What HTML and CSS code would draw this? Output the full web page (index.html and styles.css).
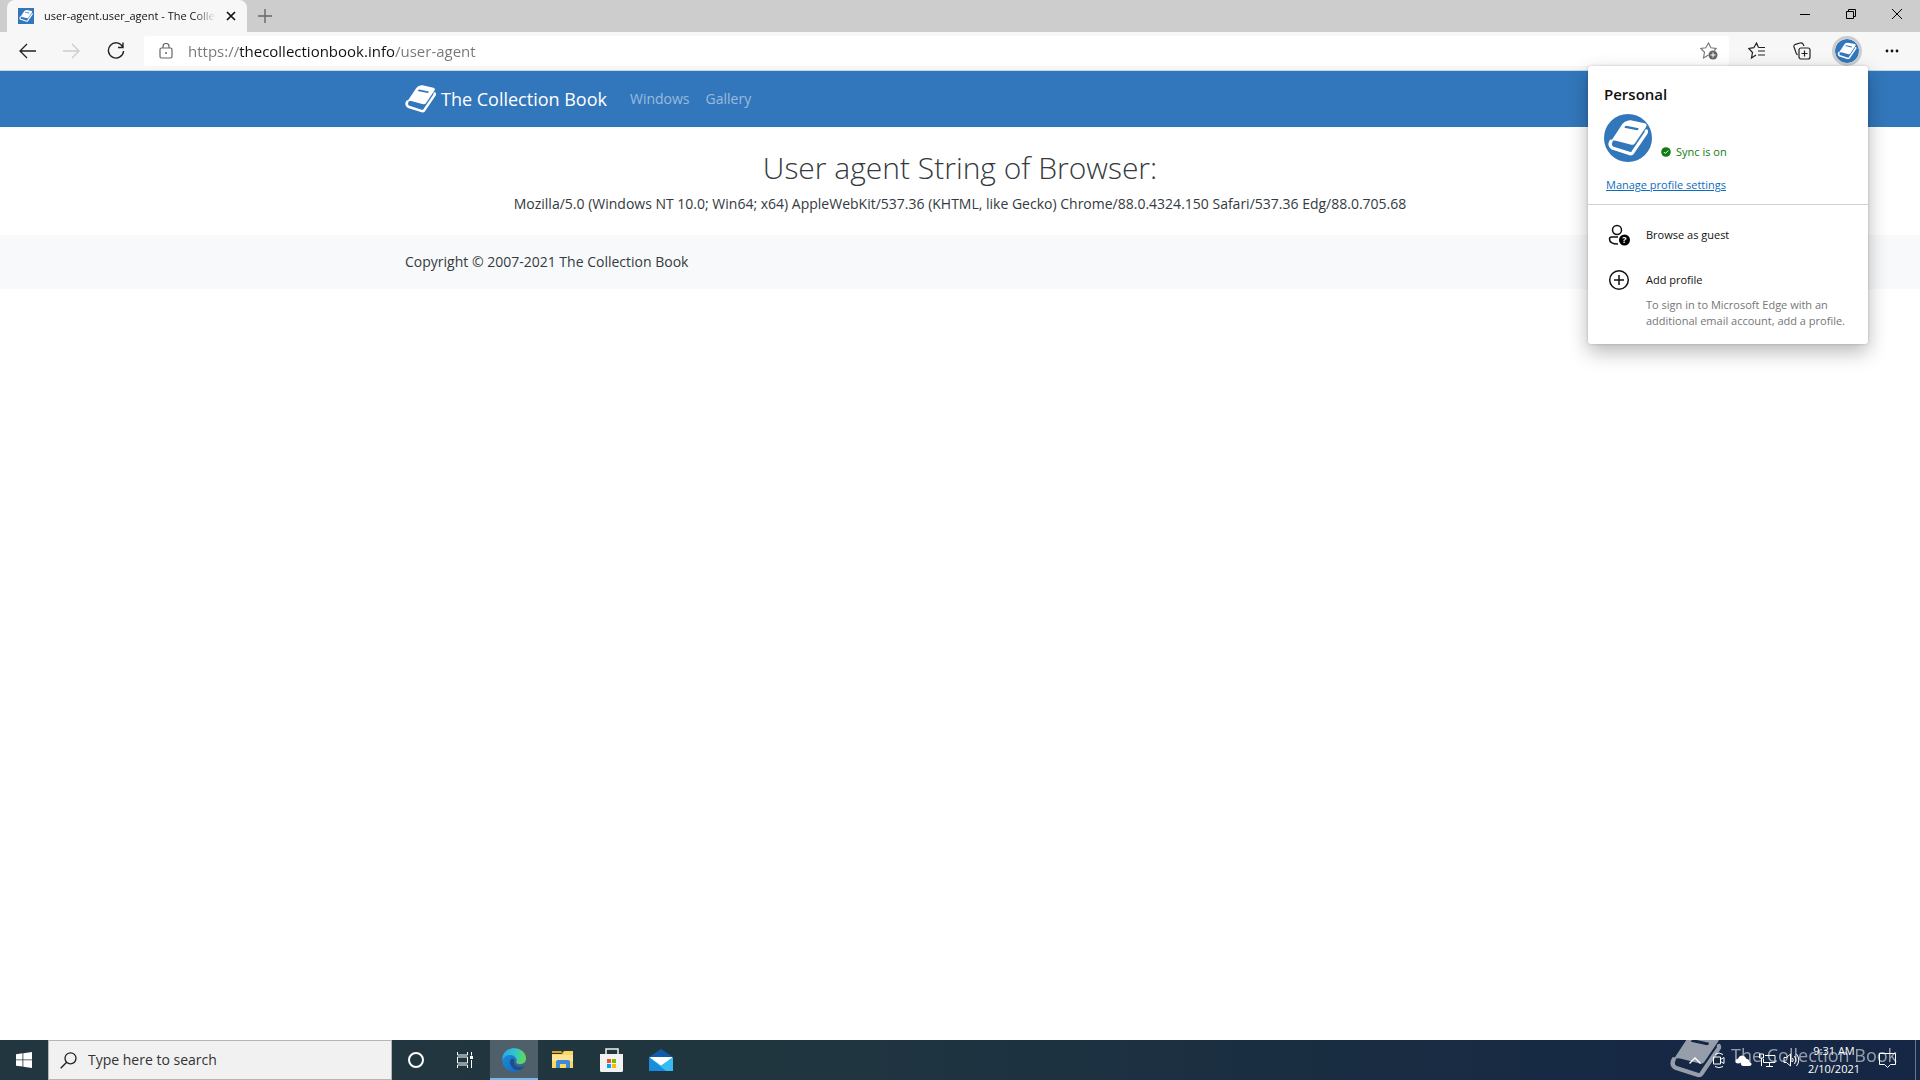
FILE: index.html
```html
<!DOCTYPE html>
<html lang="en">
<head>
<meta charset="utf-8">
<title>user-agent.user_agent - The Collection Book</title>
<link rel="stylesheet" href="styles.css">
</head>
<body>
<svg class="defs" aria-hidden="true">
  <symbol id="book" viewBox="0 0 120 108">
    <path fill="currentColor" fill-rule="evenodd" d="M59 2Q63 0 68 1L110 10Q119 13 114 21L81 70Q77 76 70 74L24 62Q15 60 8 65L43 12Q48 4 59 2ZM55 17Q51 17 49 23L87 31Q91 31 92 25Z"/>
    <path fill="none" stroke="currentColor" stroke-width="10" stroke-linecap="round" stroke-linejoin="round" d="M9 64Q2 77 13 84L66 101Q71 102 74 98L114 39Q116 36 115 33"/>
  </symbol>
</svg>
<div class="screen">
  <header class="browser">
    <div class="tabstrip">
      <div class="tab">
        <svg class="favicon" viewBox="0 0 16 16"><path fill="#3277bb" d="M0 0h16v16H0z"/><use href="#book" x="1" y="2" width="14" height="12"/></svg>
        <span class="tab-title">user-agent.user_agent - The Collection Book</span>
        <button class="plain" aria-label="Close tab"><svg width="10" height="10" viewBox="0 0 10 10"><path d="M1 1l8 8M9 1l-8 8" stroke="#111" stroke-width="1.700"/></svg></button>
      </div>
      <button class="plain new-tab" aria-label="New tab"><svg width="14" height="14" viewBox="0 0 14 14"><path d="M7 0v14M0 7h14" stroke="#666" stroke-width="1.400"/></svg></button>
      <div class="window-controls">
        <button class="plain" aria-label="Minimize"><svg width="10" height="10" viewBox="0 0 10 10"><path d="M0 5.500h10" stroke="#000"/></svg></button>
        <button class="plain" aria-label="Restore"><svg width="10" height="10" viewBox="0 0 10 10"><path d="M.5 2.500h7v7h-7zM2.500 2.500v-2h7v7h-2" fill="none" stroke="#000"/></svg></button>
        <button class="plain" aria-label="Close"><svg width="10" height="10" viewBox="0 0 10 10"><path d="M0 0l10 10M10 0L0 10" stroke="#000"/></svg></button>
      </div>
    </div>
    <div class="toolbar">
      <div class="nav-buttons">
        <button class="plain" aria-label="Back"><svg width="18" height="16" viewBox="0 0 18 16"><path d="M17 8H1M8 1L1 8l7 7" fill="none" stroke="#222" stroke-width="1.300"/></svg></button>
        <button class="plain" aria-label="Forward" disabled><svg width="18" height="16" viewBox="0 0 18 16"><path d="M0 8h16M9 1l7 7-7 7" fill="none" stroke="#ccc" stroke-width="1.300"/></svg></button>
        <button class="plain" aria-label="Refresh"><svg width="18" height="18" viewBox="0 0 18 18"><path d="M15.800 5A7.600 7.600 0 1 0 16.600 9M16 .5V5.500H11" fill="none" stroke="#222" stroke-width="1.400"/></svg></button>
      </div>
      <div class="address">
        <svg class="lock" width="14" height="16" viewBox="0 0 14 16"><g fill="none" stroke="#666" stroke-width="1.200"><rect x="1" y="5" width="12" height="10" rx="1.500"/><path d="M4 5V3.500a3 3 0 0 1 6 0V5"/></g><circle cx="7" cy="10" r="1" fill="#666"/></svg>
        <input class="url" type="text" aria-label="Address" value="https://thecollectionbook.info/user-agent">
        <button class="plain" aria-label="Add to favorites"><svg width="18" height="18" viewBox="0 0 18 18"><path d="M8.500 13L3.500 16l1-5.700L.8 6.500l5-.8L8.500 1l2.400 4.700 5.300.8-2 2" fill="none" stroke="#777" stroke-width="1.100"/><circle cx="13" cy="13" r="4.500" fill="#666"/><path d="M13 10.500v5M10.500 13h5" stroke="#fff"/></svg></button>
      </div>
      <div class="tools">
        <button class="plain" aria-label="Favorites"><svg width="18" height="18" viewBox="0 0 18 18"><path d="M8 13L3.500 16l1-5.500L.8 6.500l5-.8L8.500 1l2 4.500M10.500 5.500H17M10 9h7M10 13h7" fill="none" stroke="#222" stroke-width="1.200"/></svg></button>
        <button class="plain" aria-label="Collections"><svg width="18" height="18" viewBox="0 0 18 18"><g fill="none" stroke="#222" stroke-width="1.200"><rect x="6" y="6" width="11" height="11" rx="2"/><path d="M11.500 8.500v6M8.500 11.500h6M4.500 13Q2.500 11 2.500 9L1 5Q.5 3 2.500 2.300L7 1Q9 .5 10 2l1 2"/></g></svg></button>
        <button class="plain profile-button" aria-label="Profile"><svg class="avatar" viewBox="0 0 48 48"><circle cx="24" cy="24" r="24" fill="#3277bb"/><use href="#book" x="4" y="7" width="40" height="34"/></svg></button>
        <button class="plain" aria-label="Settings and more"><svg width="14" height="4" viewBox="0 0 14 4"><g fill="#111"><circle cx="2" cy="2" r="1.400"/><circle cx="7" cy="2" r="1.400"/><circle cx="12" cy="2" r="1.400"/></g></svg></button>
      </div>
    </div>
    <aside class="profile-menu">
      <section class="profile-head">
        <h2>Personal</h2>
        <div class="profile-row">
          <svg class="avatar large" viewBox="0 0 48 48"><circle cx="24" cy="24" r="24" fill="#3277bb"/><use href="#book" x="4" y="6" width="40" height="36"/></svg>
          <span class="sync"><svg width="10" height="10" viewBox="0 0 10 10"><circle cx="5" cy="5" r="4.800" fill="#107c10"/><path d="M2.800 5l1.500 1.500 3-3" fill="none" stroke="#fff"/></svg>Sync is on</span>
        </div>
        <a href="#profile">Manage profile settings</a>
      </section>
      <section class="profile-actions">
        <button class="plain action"><svg width="22" height="22" viewBox="0 0 22 22"><g fill="none" stroke="#111" stroke-width="1.500"><circle cx="9" cy="6" r="4.500"/><path d="M10 13H3.500Q1.500 13 1.500 15Q1.500 20 10 20"/></g><circle cx="16.500" cy="16" r="5.500"/><text x="16.500" y="19" text-anchor="middle" class="question">?</text></svg><span>Browse as guest</span></button>
        <button class="plain action"><svg width="22" height="22" viewBox="0 0 22 22"><g fill="none" stroke="#111" stroke-width="1.500"><circle cx="11" cy="11" r="9.300"/><path d="M11 6v10M6 11h10"/></g></svg><span>Add profile</span></button>
        <p>To sign in to Microsoft Edge with an additional email account, add a profile.</p>
      </section>
    </aside>
  </header>

  <nav class="site-nav">
    <div class="container">
      <a class="brand" href="#home"><svg width="31" height="28"><use href="#book"/></svg>The Collection Book</a>
      <a class="nav-link" href="#windows">Windows</a>
      <a class="nav-link" href="#gallery">Gallery</a>
    </div>
  </nav>
  <main>
    <h1>User agent String of Browser:</h1>
    <p>Mozilla/5.0 (Windows NT 10.0; Win64; x64) AppleWebKit/537.36 (KHTML, like Gecko) Chrome/88.0.4324.150 Safari/537.36 Edg/88.0.705.68</p>
  </main>
  <footer class="site-footer"><div class="container">Copyright © 2007-2021 The Collection Book</div></footer>

  <div class="taskbar">
    <button class="plain task" aria-label="Start"><svg width="16" height="16" viewBox="0 0 16 16"><path fill="#fff" d="M0 2.200L6.500 1.300V7.500H0zM7.300 1.200L16 0v7.500H7.300zM0 8.300h6.500v6.300L0 13.700zM7.300 8.300H16V16l-8.700-1.200z"/></svg></button>
    <label class="search">
      <svg width="17" height="17" viewBox="0 0 17 17"><circle cx="10.500" cy="6.300" r="5.500" fill="none" stroke="#222" stroke-width="1.300"/><path d="M6.700 10.200L.7 16.300" stroke="#222" stroke-width="1.400"/></svg>
      <input type="search" aria-label="Search" placeholder="Type here to search">
    </label>
    <div class="apps">
      <button class="plain task" aria-label="Cortana"><svg width="18" height="18" viewBox="0 0 18 18"><circle cx="9" cy="9" r="7" fill="none" stroke="#fff" stroke-width="2"/></svg></button>
      <button class="plain task" aria-label="Task View"><svg width="18" height="16" viewBox="0 0 18 16"><path d="M1.500 0v3h10V0M1.500 16v-3h10v3M1.500 5h10v6h-10zM15.500 0v3.500M15.500 8v8" fill="none" stroke="#fff"/><path fill="#fff" d="M14 4h3v3h-3z"/></svg></button>
      <button class="plain task active" aria-label="Microsoft Edge"><svg width="24" height="24" viewBox="0 0 24 24"><defs><linearGradient id="e1" x1="0" x2="1" y1=".4" y2=".5"><stop stop-color="#2aa8e8"/><stop offset=".5" stop-color="#2fc5ce"/><stop offset="1" stop-color="#63dc50"/></linearGradient><linearGradient id="e2" x2="1" y2="1"><stop stop-color="#1f92df"/><stop offset="1" stop-color="#1761b5"/></linearGradient></defs><circle cx="12" cy="12" r="11.800" fill="url(#e2)"/><path fill="#164f96" d="M10 10Q6 14 9.500 18.500Q13 23.500 19 21.500Q21.500 20 22.500 18Q17 20.500 13.700 17.500Q11 15 12.500 12Z"/><path fill="#50606b" d="M13 11Q11 15 14 17.500Q17.500 20.300 22.600 17.800L24 16.500V14Q20 17.500 16 16Q13.500 15 14.300 13Z"/><path fill="url(#e1)" d="M.2 12C.5 5 5.500.2 12 .2C19 .2 24 5 24 10.500C24 15 19.500 17 15.800 15.800C13 14.800 15 13.500 14.500 11.300C13.800 8.500 11 7 8 7C4.500 7 1.500 9 .2 12Z"/></svg></button>
      <button class="plain task" aria-label="File Explorer"><svg width="22" height="20" viewBox="0 0 22 20"><path fill="#e6a01e" d="M0 1h9l2 2H0z"/><path fill="#fbd766" d="M0 4h10l2-3h9v17H0z"/><path fill="#ffe497" d="M0 5h21v6H0z"/><path fill="#3c8cd1" d="M4 18v-6q0-2 2-2h10q2 0 2 2v6h-4v-4H8v4z"/></svg></button>
      <button class="plain task" aria-label="Microsoft Store"><svg width="24" height="24" viewBox="0 0 24 24"><path d="M6 7V1h12v6" fill="none" stroke="#f2f2f2" stroke-width="1.500"/><path fill="#f2f2f2" d="M0 6h23v16.500q0 1.500-1.500 1.500H1.500Q0 24 0 22.500z"/><path fill="#f25022" d="M7 11h4v4H7z"/><path fill="#7fba00" d="M12 11h4v4h-4z"/><path fill="#00a4ef" d="M7 16h4v4H7z"/><path fill="#ffb900" d="M12 16h4v4h-4z"/></svg></button>
      <button class="plain task" aria-label="Mail"><svg width="24" height="22" viewBox="0 0 24 22"><path fill="#0f5ba9" d="M0 8L12 0l12 8v4H0z"/><path fill="#fff" d="M1 8h22v6l-11 3-9-5z"/><path fill="#35bdf3" d="M0 8l12 8.500L24 8v14H0z"/><path fill="#1a8cdb" d="M0 22V8l17 14z"/></svg></button>
    </div>
    <div class="tray">
      <button class="plain" aria-label="Show hidden icons"><svg width="12" height="7" viewBox="0 0 12 7"><path d="M.5 6.500L6 1l5.500 5.500" fill="none" stroke="#fff" stroke-width="1.300"/></svg></button>
      <button class="plain" aria-label="Meet Now"><svg width="14" height="16" viewBox="0 0 14 16"><path d="M1.500 5h7v7h-7zM8.500 7.500l3.500-2v6l-3.500-2M3 2.500Q7-.5 11 2.500M3 14.500Q7 17 11 14.500" fill="none" stroke="#fff"/></svg></button>
      <button class="plain" aria-label="OneDrive"><svg width="17" height="11" viewBox="0 0 17 11"><path fill="#fff" d="M1 8Q-.5 4.500 3 3.500Q5-.5 9 1Q11 2 11 3.500Q14.500 4 14.500 7Q17 7.500 16.500 9.500Q16 11 14 11H8Q5 10.500 6 7.500Q4 9 1 8Z"/></svg></button>
      <button class="plain" aria-label="Network"><svg width="17" height="14" viewBox="0 0 17 14"><path d="M6 2.500h10v7H4.500V6M.5 1h4v4h-4zM2.500 5v8M10.500 9.500v4M7 13.500h7" fill="none" stroke="#fff"/></svg></button>
      <button class="plain" aria-label="Volume"><svg width="17" height="14" viewBox="0 0 17 14"><path d="M1 4.500h2.500l4-3.500v12l-4-3.500H1zM9.500 5q1.500 2 0 4M11.500 3q3 4 0 8M13.500 1q4.500 6 0 12" fill="none" stroke="#fff"/></svg></button>
      <button class="plain clock"><span>9:31 AM</span><span>2/10/2021</span></button>
      <button class="plain notify" aria-label="Notifications"><svg width="17" height="17" viewBox="0 0 17 17"><path d="M.5 1.500h16v11h-5l-3 3-3-3h-5z" fill="none" stroke="#fff"/></svg></button>
      <button class="plain desktop" aria-label="Show desktop"></button>
    </div>
    <div class="watermark"><svg width="53" height="46"><use href="#book"/></svg><span>The Collection Book</span></div>
  </div>
</div>
</body>
</html>
```
FILE: styles.css
```css
* { box-sizing: border-box; }
body { margin: 0; font: 14px/24px "Open Sans", "Noto Sans", sans-serif; color: #343a40; background: #fff; }
h1, h2, p { margin: 0; font-weight: 400; }
svg { display: block; flex: none; }
.defs { position: absolute; width: 0; height: 0; }
.plain { display: flex; align-items: center; justify-content: center; padding: 0; border: 0; background: none; color: inherit; font: inherit; }
.screen { display: flex; flex-direction: column; min-height: 100vh; }

.browser { position: relative; z-index: 1; }
.tabstrip { display: flex; height: 32px; padding-left: 7px; background: #cdcdcd; }
.tab { display: flex; align-items: center; width: 240px; padding: 0 11px; gap: 10px; border-radius: 8px 8px 0 0; background: #f7f7f7; color: #111; font-size: 11px; }
.favicon { width: 16px; height: 16px; color: #fff; }
.tab-title { flex: 1; overflow: hidden; white-space: nowrap; -webkit-mask-image: linear-gradient(90deg, #000 87%, transparent); mask-image: linear-gradient(90deg, #000 87%, transparent); }
.new-tab { width: 36px; }
.window-controls { display: flex; margin-left: auto; padding-bottom: 4px; }
.window-controls button { width: 46px; }
.toolbar { display: flex; height: 39px; padding: 4px 8px 4px 6px; background: #f7f7f7; border-bottom: 1px solid #c4d7e8; }
.nav-buttons { display: flex; width: 138px; }
.nav-buttons button { width: 44px; }
.address { display: flex; flex: 1; align-items: center; padding: 0 11px 0 15px; border-radius: 3px; background: #fff; }
.url { flex: 1; min-width: 0; margin-left: 15px; padding: 0; border: 0; outline: 0; font: inherit; font-size: 15px; color: transparent; background: linear-gradient(90deg, #757575 51px, #111 51px, #111 206px, #757575 206px); -webkit-background-clip: text; background-clip: text; }
.tools { display: flex; gap: 5px; padding-left: 8px; }
.tools button { width: 40px; }
.avatar { width: 24px; height: 24px; color: #fff; }
.avatar.large { width: 48px; height: 48px; }
.profile-button .avatar { width: 30px; height: 30px; border: 3px solid #ccc; border-radius: 50%; }

.profile-menu { position: absolute; top: 66px; right: 52px; width: 280px; border-radius: 3px; background: #fff; color: #111; font-size: 11px; line-height: 16px; box-shadow: 0 8px 20px rgba(0, 0, 0, .28), 0 0 3px rgba(0, 0, 0, .2); }
.profile-head { padding: 18px 16px 11px; border-bottom: 1px solid #d1d1d1; }
.profile-head h2 { font-size: 15px; line-height: 20px; font-weight: 600; }
.profile-row { display: flex; align-items: flex-end; gap: 9px; margin: 10px 0 15px; }
.sync { display: flex; align-items: center; gap: 5px; padding-bottom: 2px; color: #107c10; }
.profile-head a { margin-left: 2px; color: #0f6cbd; }
.profile-actions { padding: 7px 16px 15px; }
.action { width: 100%; height: 45px; justify-content: flex-start; gap: 16px; padding-left: 4px; }
.profile-actions p { margin-top: -5px; padding-left: 42px; color: #767676; }
.question { fill: #fff; font-size: 9px; font-weight: 700; }

.site-nav { background: #3277bb; }
.container { width: 1140px; max-width: 100%; margin: 0 auto; padding: 0 15px; }
.site-nav .container { display: flex; align-items: center; height: 56px; }
.brand { display: flex; align-items: center; gap: 5px; margin-right: 23px; color: #fff; font-size: 18px; text-decoration: none; }
.nav-link { margin-right: 16px; color: rgba(255, 255, 255, .5); text-decoration: none; }
main { padding: 22px 15px 19px; text-align: center; }
h1 { margin-bottom: 5px; font-size: 30px; line-height: 38px; font-weight: 300; }
.site-footer { padding: 15px 0; background: #f8f9fa; }

.taskbar { position: relative; display: flex; height: 40px; margin-top: auto; background: linear-gradient(90deg, #22363f, #20363f 40%, #152744 90%); color: #fff; }
.task { width: 48px; }
.search { display: flex; align-items: center; gap: 11px; width: 344px; padding-left: 11px; border: 1px solid #b5b5b5; background: #f1f1f1; }
.search input { flex: 1; min-width: 0; padding: 0; border: 0; outline: 0; background: none; font: inherit; }
.search input::placeholder { color: #333; opacity: 1; }
.apps { display: flex; gap: 1px; }
.active { background: #50606b; box-shadow: inset 0 -2px #76b9ed; }
.tray { display: flex; margin-left: auto; font-size: 11px; line-height: 18px; }
.tray button { width: 24px; }
.tray .clock { flex-direction: column; width: 62px; }
.tray .notify { width: 44px; margin-right: 6px; }
.tray .desktop { width: 5px; border-left: 1px solid #6a758a; }
.watermark { position: absolute; right: 23px; bottom: 2px; display: flex; align-items: center; gap: 9px; color: #fff; font-size: 18px; opacity: .55; pointer-events: none; }
```
